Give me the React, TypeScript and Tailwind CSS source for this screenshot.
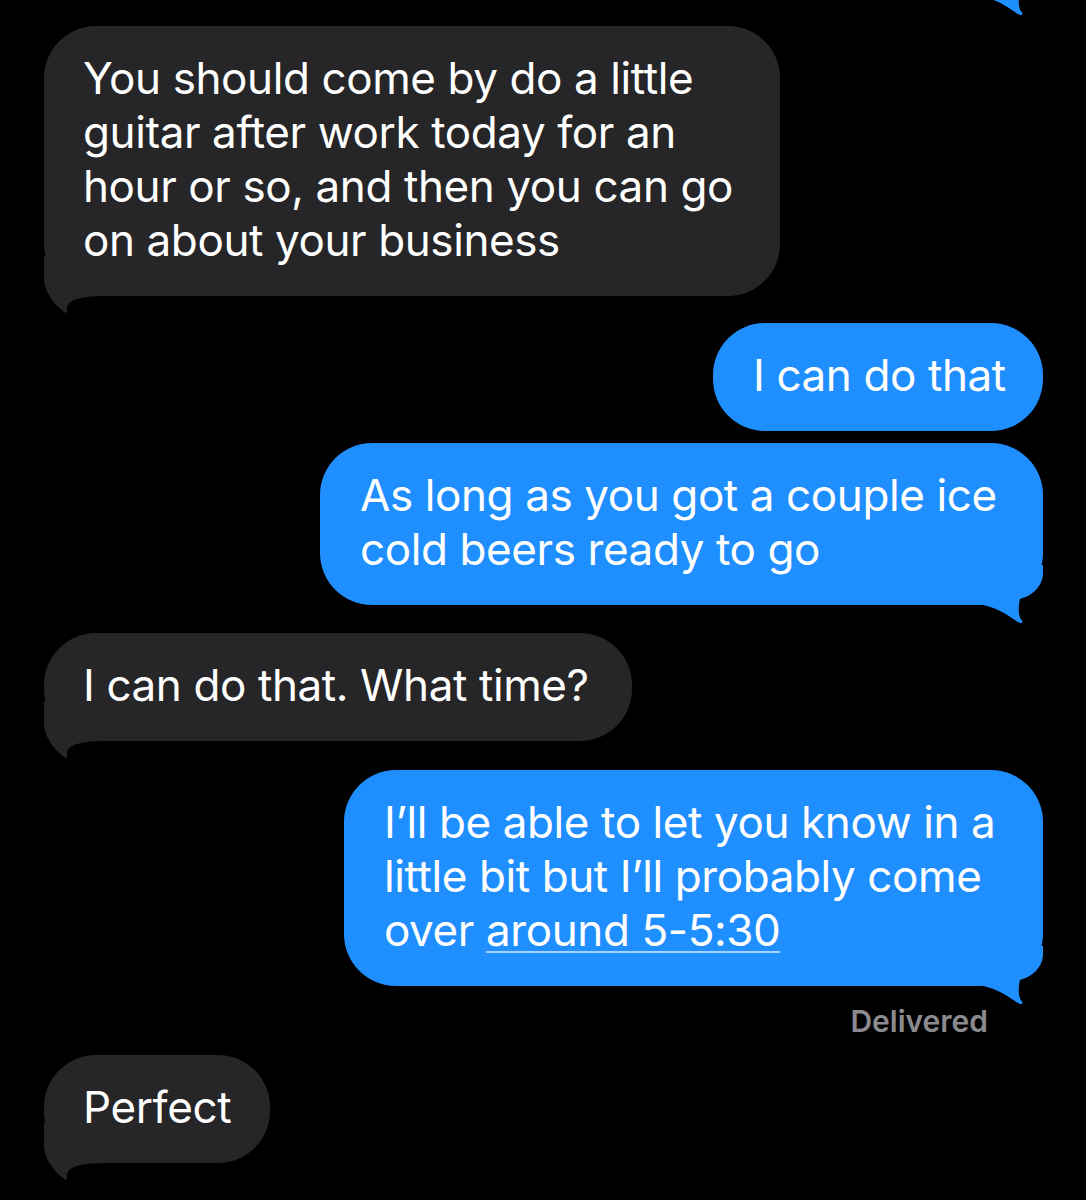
import React from "react";

type Side = "in" | "out";

function Tail({ side }: { side: Side }) {
    if (side === "in") {
        return (
            <svg
                className="absolute left-0 bottom-[-20px]"
                width="60"
                height="60"
                viewBox="0 -40 60 60"
            >
                <path
                    d="M 0 -40 L 0 -15 C 2 -2, 10 8, 19 15 C 21 17.5, 24 17.5, 23 14 C 22 10, 25 6, 31 3.5 C 39 1, 49 0, 60 0 L 60 -40 Z"
                    fill="#262628"
                />
            </svg>
        );
    }
    return (
        <svg
            className="absolute right-0 bottom-[-20px]"
            width="60"
            height="60"
            viewBox="-60 -40 60 60"
        >
            <path
                d="M 0 -40 L 0 -32 C 0 -18, -12 -9, -23 -6 C -25 2, -25 12, -21 15.5 C -19.5 17.5, -22 19, -25 17 C -33 12, -44 3, -60 0 L -60 -40 Z"
                fill="#1f8fff"
            />
        </svg>
    );
}

function Bubble({
    side,
    width,
    tail = true,
    children,
}: {
    side: Side;
    width: string;
    tail?: boolean;
    children: React.ReactNode;
}) {
    const base =
        side === "in"
            ? "relative self-start ml-[44px] bg-[#262628] pl-[39px]"
            : "relative self-end mr-[43px] bg-[#1f8fff] pl-[40px]";
    return (
        <div className={`${base} ${width} rounded-[52px] pt-[26px] pb-[28px] text-white text-[44px] leading-[54px] tracking-[-0.4px] whitespace-nowrap`}>
            <div className="relative z-10 top-[-1px]">{children}</div>
            {tail && <Tail side={side} />}
        </div>
    );
}

export default function App() {
    return (
        <div
            className="min-h-[1200px] w-[1086px] bg-black overflow-hidden flex flex-col"
            style={{ fontFamily: "Inter, 'Noto Sans', sans-serif" }}
        >
            {/* tail of the previous message, cut off at the top */}
            <div className="h-[26px] flex justify-end pr-[43px]">
                <svg width="60" height="26" viewBox="-60 3 60 26">
                    <path
                        d="M 0 -40 L 0 -32 C 0 -18, -12 -9, -23 -6 C -25 2, -25 12, -21 15.5 C -19.5 17.5, -22 19, -25 17 C -33 12, -44 3, -60 0 L -60 -40 Z"
                        fill="#1f8fff"
                    />
                </svg>
            </div>

            <Bubble side="in" width="w-[736px]">
                <span className="block">You should come by do a little</span>
                <span className="block">guitar after work today for an</span>
                <span className="block">hour or so, and then you can go</span>
                <span className="block">on about your business</span>
            </Bubble>

            <div className="mt-[27px] flex flex-col">
                <Bubble side="out" width="w-[330px]" tail={false}>
                    I can do that
                </Bubble>
            </div>

            <div className="mt-[12px] flex flex-col">
                <Bubble side="out" width="w-[723px]">
                    <span className="block">As long as you got a couple ice</span>
                    <span className="block">cold beers ready to go</span>
                </Bubble>
            </div>

            <div className="mt-[28px] flex flex-col">
                <Bubble side="in" width="w-[588px]">
                    I can do that. What time?
                </Bubble>
            </div>

            <div className="mt-[29px] flex flex-col">
                <Bubble side="out" width="w-[699px]">
                    <span className="block">I’ll be able to let you know in a</span>
                    <span className="block">little bit but I’ll probably come</span>
                    <span className="block">
                        over{" "}
                        <span className="underline decoration-2 decoration-white/60 underline-offset-[5px]">
                            around 5-5:30
                        </span>
                    </span>
                </Bubble>
            </div>

            <div className="mt-[18px] self-end mr-[98px] text-[30px] leading-[34px] font-semibold text-[#8a8a8f]">
                Delivered
            </div>

            <div className="mt-[17px] flex flex-col">
                <Bubble side="in" width="w-[226px]">
                    Perfect
                </Bubble>
            </div>
        </div>
    );
}
